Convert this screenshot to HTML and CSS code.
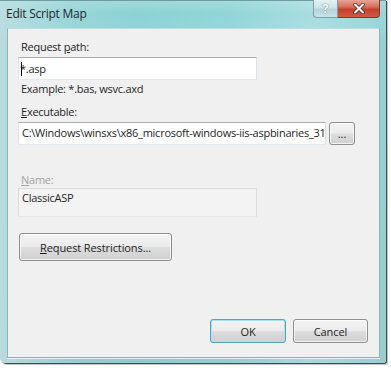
FILE: index.html
```html
<!doctype html>
<html lang="en">
  <head>
    <meta charset="UTF-8" />
    <title>Edit Script Map</title>
    <link rel="stylesheet" href="styles.css">
  </head>
  <body>
    <div class="window">
      <div class="titlebar">
        <span class="title">Edit Script Map</span>
        <div class="caption-buttons">
          <span class="help-button">?</span>
          <span class="close-button">
            <svg width="14" height="11" viewBox="0 0 14 11">
              <path d="M3 1.5 L11 9.5 M11 1.5 L3 9.5" stroke="#5a2620" stroke-width="3.6" stroke-linecap="round" fill="none" />
              <path d="M3 1.5 L11 9.5 M11 1.5 L3 9.5" stroke="#ffffff" stroke-width="2" stroke-linecap="round" fill="none" />
            </svg>
          </span>
        </div>
      </div>

      <div class="client">
        <label class="field-label">Request <u>p</u>ath:</label>
        <div class="textbox path-box"><span class="caret"></span>*.asp</div>
        <div class="hint">Example: *.bas, wsvc.axd</div>

        <label class="field-label executable-label"><u>E</u>xecutable:</label>
        <div class="exec-row">
          <div class="textbox exec-box">C:\Windows\winsxs\x86_microsoft-windows-iis-aspbinaries_31bf3856ad364e35</div>
          <button class="button browse-button">...</button>
        </div>

        <label class="field-label name-label"><u>N</u>ame:</label>
        <div class="name-box">ClassicASP</div>

        <button class="button restrictions-button"><u>R</u>equest Restrictions...</button>

        <div class="footer">
          <button class="button ok-button">OK</button>
          <button class="button cancel-button">Cancel</button>
        </div>
      </div>
    </div>
  </body>
</html>
```

FILE: styles.css
```css
* {
  margin: 0;
  padding: 0;
  box-sizing: border-box;
}

body {
  font-family: 'Open Sans', 'Noto Sans', sans-serif;
  font-size: 11px;
  letter-spacing: -0.25px;
  color: #252525;
  background: #ffffff;
  width: 391px;
  height: 368px;
  overflow: hidden;
}

.window {
  width: 386px;
  height: 363px;
  padding: 0 6px 5px 7px;
  display: flex;
  flex-direction: column;
  background:
    linear-gradient(90deg, rgba(214, 230, 231, 0.6) 0%, rgba(190, 222, 224, 0.25) 18%, rgba(140, 215, 218, 0) 35%, rgba(170, 228, 230, 0.2) 60%, rgba(215, 238, 239, 0.4) 82%, rgba(190, 225, 228, 0.2) 100%),
    linear-gradient(180deg, #a0dadc 0%, #8bd2d5 14px, #90d4d6 25px, #8bcccf 40px, #8ccacc 100%);
  border-radius: 0 0 3px 5px;
  box-shadow: inset 0 1px 0 #6d9da0, 1px 1px 0 #3f4d4f, 2px 2px 1px rgba(0, 0, 0, 0.25);
}

.titlebar {
  height: 28px;
  display: flex;
  justify-content: space-between;
  align-items: flex-start;
}

.title {
  margin-top: 6px;
  margin-left: -1px;
  font-size: 12px;
  line-height: 16px;
  color: #1c2a2c;
}

.caption-buttons {
  display: flex;
}

.help-button {
  width: 25px;
  height: 18px;
  border: 1px solid #7f9ea2;
  border-top: none;
  border-radius: 0 0 0 4px;
  background: linear-gradient(180deg, #e2f1f2 0%, #cde5e8 45%, #b4d4d8 55%, #c8e4e8 100%);
  color: #ffffff;
  font-size: 13px;
  font-weight: bold;
  line-height: 17px;
  text-align: center;
  text-shadow: 0 0 1px #5d7b80, 0 0 1px #5d7b80;
}

.close-button {
  width: 42px;
  height: 18px;
  border: 1px solid #7a3a33;
  border-top: none;
  border-left: none;
  border-radius: 0 0 4px 0;
  background: linear-gradient(180deg, #e9a596 0%, #d7705f 40%, #c5402e 55%, #d25a40 100%);
  display: flex;
  align-items: center;
  justify-content: center;
}

.client {
  flex: 1;
  display: flex;
  flex-direction: column;
  align-items: flex-start;
  padding: 10px 11px 14px 11px;
  background: #f0f0f0;
  border: 1px solid #86b6ba;
  border-top-color: #b9e0e1;
  box-shadow: 0 1px 0 rgba(255, 255, 255, 0.7);
}

.field-label {
  display: block;
  line-height: 16px;
  margin-left: 2px;
}

.textbox {
  background: #ffffff;
  border: 1px solid;
  border-color: #abadb3 #dbdfe6 #e3e9ef #e2e3ea;
  height: 23px;
  line-height: 20px;
  white-space: nowrap;
  overflow: hidden;
}

.path-box {
  width: 239px;
  margin-top: 2px;
  margin-left: -1px;
  padding-left: 2px;
  display: flex;
  align-items: center;
}

.caret {
  width: 1px;
  height: 14px;
  background: #000000;
  margin-right: -2px;
}

.hint {
  margin-top: 1px;
  margin-left: 2px;
  line-height: 16px;
}

.executable-label {
  margin-top: 7px;
}

.exec-row {
  display: flex;
  gap: 3px;
  margin-top: 2px;
  margin-left: -1px;
}

.exec-box {
  width: 308px;
  padding-left: 3px;
}

.button {
  font-family: inherit;
  font-size: 11px;
  letter-spacing: -0.1px;
  color: #1e1e1e;
  border: 1px solid #8e8f8f;
  border-radius: 3px;
  background: linear-gradient(180deg, #f4f4f4 0%, #ebebeb 48%, #dddddd 52%, #d0d0d0 100%);
  box-shadow: inset 0 0 0 1px rgba(255, 255, 255, 0.7);
}

.browse-button {
  width: 26px;
  height: 23px;
  line-height: 14px;
}

.name-label {
  margin-top: 27px;
  color: #a3a3a3;
}

.name-box {
  width: 239px;
  height: 29px;
  margin-left: -1px;
  padding: 1px 0 0 3px;
  line-height: 16px;
  background: #f3f3f3;
  border: 1px solid #dcdcdc;
  border-bottom-color: #e6e6e6;
}

.restrictions-button {
  width: 153px;
  height: 28px;
  margin-top: 16px;
}

.footer {
  margin-top: auto;
  align-self: flex-end;
  display: flex;
  gap: 7px;
}

.ok-button,
.cancel-button {
  width: 76px;
  height: 24px;
}

.cancel-button {
  width: 75px;
}

.ok-button {
  border-color: #4fa3bc;
  box-shadow: inset 0 0 0 1px #a9e1ee;
}
```
